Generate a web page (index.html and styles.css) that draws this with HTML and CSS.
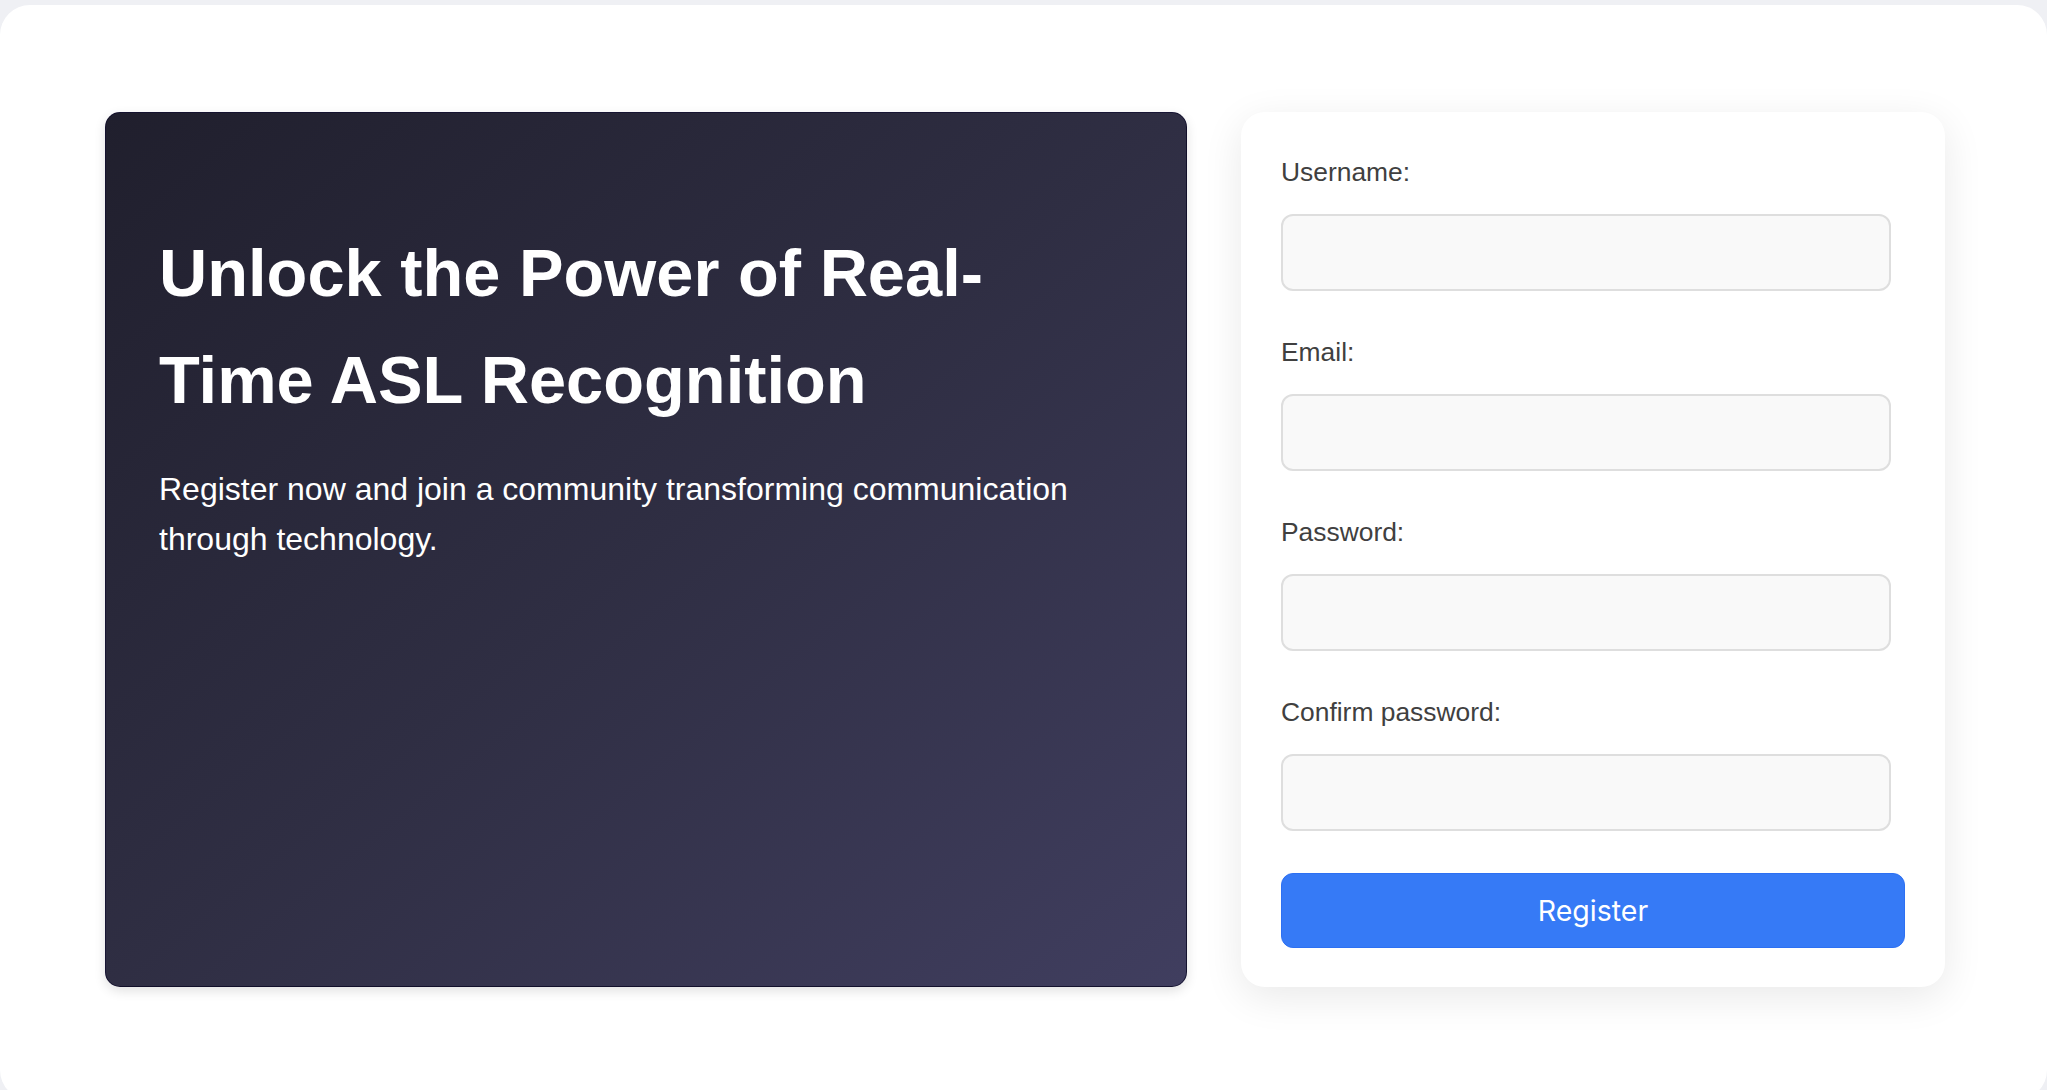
FILE: index.html
```html
<!DOCTYPE html>
<html lang="en">
<head>
<meta charset="utf-8">
<title>Register</title>
<link rel="stylesheet" href="styles.css">
</head>
<body>
<div class="page">
  <div class="layout">
    <section class="hero">
      <h1 class="hero-title">Unlock the Power of Real-Time ASL Recognition</h1>
      <p class="hero-text">Register now and join a community transforming communication through technology.</p>
    </section>
    <form class="form-card">
      <div class="field">
        <label class="field-label" for="username">Username:</label>
        <input class="field-input" id="username" type="text">
      </div>
      <div class="field">
        <label class="field-label" for="email">Email:</label>
        <input class="field-input" id="email" type="email">
      </div>
      <div class="field">
        <label class="field-label" for="password">Password:</label>
        <input class="field-input" id="password" type="password">
      </div>
      <div class="field field-last">
        <label class="field-label" for="confirm">Confirm password:</label>
        <input class="field-input" id="confirm" type="password">
      </div>
      <button class="submit" type="button">Register</button>
    </form>
  </div>
</div>
</body>
</html>
```

FILE: styles.css
```css
* { box-sizing: border-box; }

html, body {
  margin: 0;
  padding: 0;
}

body {
  background: #eff0f4;
  font-family: "Liberation Sans", Arial, sans-serif;
  overflow: hidden;
}

.page {
  margin-top: 5px;
  min-height: 1095px;
  background: #ffffff;
  border-radius: 30px;
  padding: 107px 0 0 105px;
}

.layout {
  display: flex;
  gap: 54px;
  align-items: stretch;
}

.hero {
  flex: 0 0 1082px;
  border-radius: 15px;
  border: 1px solid rgba(12, 10, 40, 0.75);
  background: linear-gradient(to bottom right, #201f2d 0%, #2f2e43 50%, #403e5f 100%);
  box-shadow: 0 4px 12px rgba(0, 0, 0, 0.12);
  padding: 53px;
  color: #ffffff;
}

.hero-title {
  margin: 54px 0 0 0;
  max-width: 900px;
  font-size: 66.8px;
  line-height: 107px;
  font-weight: 700;
}

.hero-text {
  margin: 31px 0 0 0;
  font-size: 32px;
  line-height: 49.6px;
  max-width: 960px;
}

.form-card {
  flex: 0 0 704px;
  background: #ffffff;
  border-radius: 24px;
  box-shadow: 0 10px 40px rgba(0, 0, 0, 0.09);
  padding: 45px 40px 39px 40px;
  display: flex;
  flex-direction: column;
}

.field {
  display: flex;
  flex-direction: column;
  margin-bottom: 46px;
}

.field-last {
  margin-bottom: 42px;
}

.field-label {
  font-size: 26.4px;
  line-height: 30px;
  color: #404040;
  margin-bottom: 27px;
}

.field-input {
  width: 610px;
  height: 77px;
  border: 2px solid #dedede;
  border-radius: 12px;
  background: #f9f9f9;
  font-size: 26px;
  padding: 0 16px;
  outline: none;
}

.submit {
  width: 100%;
  height: 75px;
  border: 1px solid #2d70f2;
  border-radius: 12px;
  background: #367af6;
  color: #ffffff;
  font-family: Inter, "Liberation Sans", sans-serif;
  font-size: 28.5px;
  font-weight: 400;
  cursor: pointer;
}
```
